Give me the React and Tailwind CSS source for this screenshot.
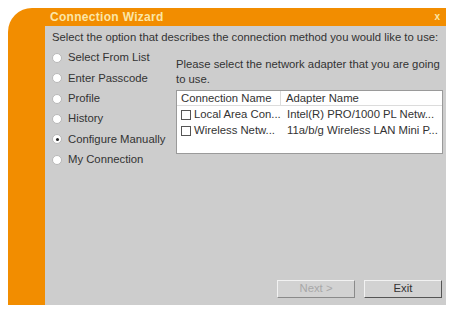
export default function App() {
  const radios = [
    "Select From List",
    "Enter Passcode",
    "Profile",
    "History",
    "Configure Manually",
    "My Connection",
  ];
  return (
    <div className="w-[451px] h-[309px] bg-white pt-[8px] pl-[8px] text-[11.3px] leading-none text-[#333]" style={{ fontFamily: '"Liberation Sans", Tahoma, sans-serif' }}>
      <div className="w-[438px] h-[297px] bg-[#f28d00] rounded-tl-[24px] flex flex-col overflow-hidden">
        <div className="h-[18px] flex items-center pl-[42px] pr-[6px] shrink-0">
          <span className="text-[#fbe6a6] font-bold text-[12px] tracking-[0.3px] flex-1">Connection Wizard</span>
          <span className="text-[#fbe6a6] font-bold text-[10px]">x</span>
        </div>
        <div className="flex flex-1">
          <div className="w-[37px] shrink-0" />
          <div className="flex-1 bg-[#cdcdcd] pl-[7px] pr-[4px] pt-[6px] relative">
            <div>Select the option that describes the connection method you would like to use:</div>
            <div className="flex mt-[9px]">
              <div className="flex flex-col gap-[9.4px] w-[124px] shrink-0">
                {radios.map((r, i) => (
                  <div key={r} className="flex items-center gap-[6px] h-[11px]">
                    <span className="w-[10px] h-[10px] rounded-full bg-white border border-[#b8b8b8] flex items-center justify-center">
                      {i === 4 && <span className="w-[3px] h-[3px] rounded-full bg-[#222]" />}
                    </span>
                    <span>{r}</span>
                  </div>
                ))}
              </div>
              <div className="flex-1 pt-[5px]">
                <div className="leading-[15px]">Please select the network adapter that you are going<br />to use.</div>
                <div className="mt-[3px] w-[267px] h-[64px] bg-white border border-[#9a9a9a]">
                  <div className="flex h-[15px] border-b border-[#dcdcdc] items-center">
                    <div className="w-[104px] pl-[4px] border-r border-[#dcdcdc] h-full flex items-center">Connection Name</div>
                    <div className="pl-[5px]">Adapter Name</div>
                  </div>
                  {[
                    ["Local Area Con...", "Intel(R) PRO/1000 PL Netw..."],
                    ["Wireless Netw...", "11a/b/g Wireless LAN Mini P..."],
                  ].map(([a, b]) => (
                    <div key={a} className="flex items-center h-[15px] mt-[1px] first-of-type:mt-[2px]">
                      <div className="w-[105px] pl-[4px] flex items-center gap-[3px]">
                        <span className="w-[10px] h-[10px] border border-[#555] bg-white" />
                        <span>{a}</span>
                      </div>
                      <div className="pl-[5px]">{b}</div>
                    </div>
                  ))}
                </div>
              </div>
            </div>
            <div className="absolute right-[5px] bottom-[7px] flex gap-[9px]">
              <div className="w-[78px] h-[18px] border border-[#f2f2f2] border-r-[#8a8a8a] border-b-[#8a8a8a] bg-[#d2d2d2] flex items-center justify-center text-[#a8a8a8]">Next &gt;</div>
              <div className="w-[78px] h-[18px] border border-[#f2f2f2] border-r-[#555] border-b-[#555] bg-[#d2d2d2] flex items-center justify-center">Exit</div>
            </div>
          </div>
        </div>
      </div>
    </div>
  );
}
